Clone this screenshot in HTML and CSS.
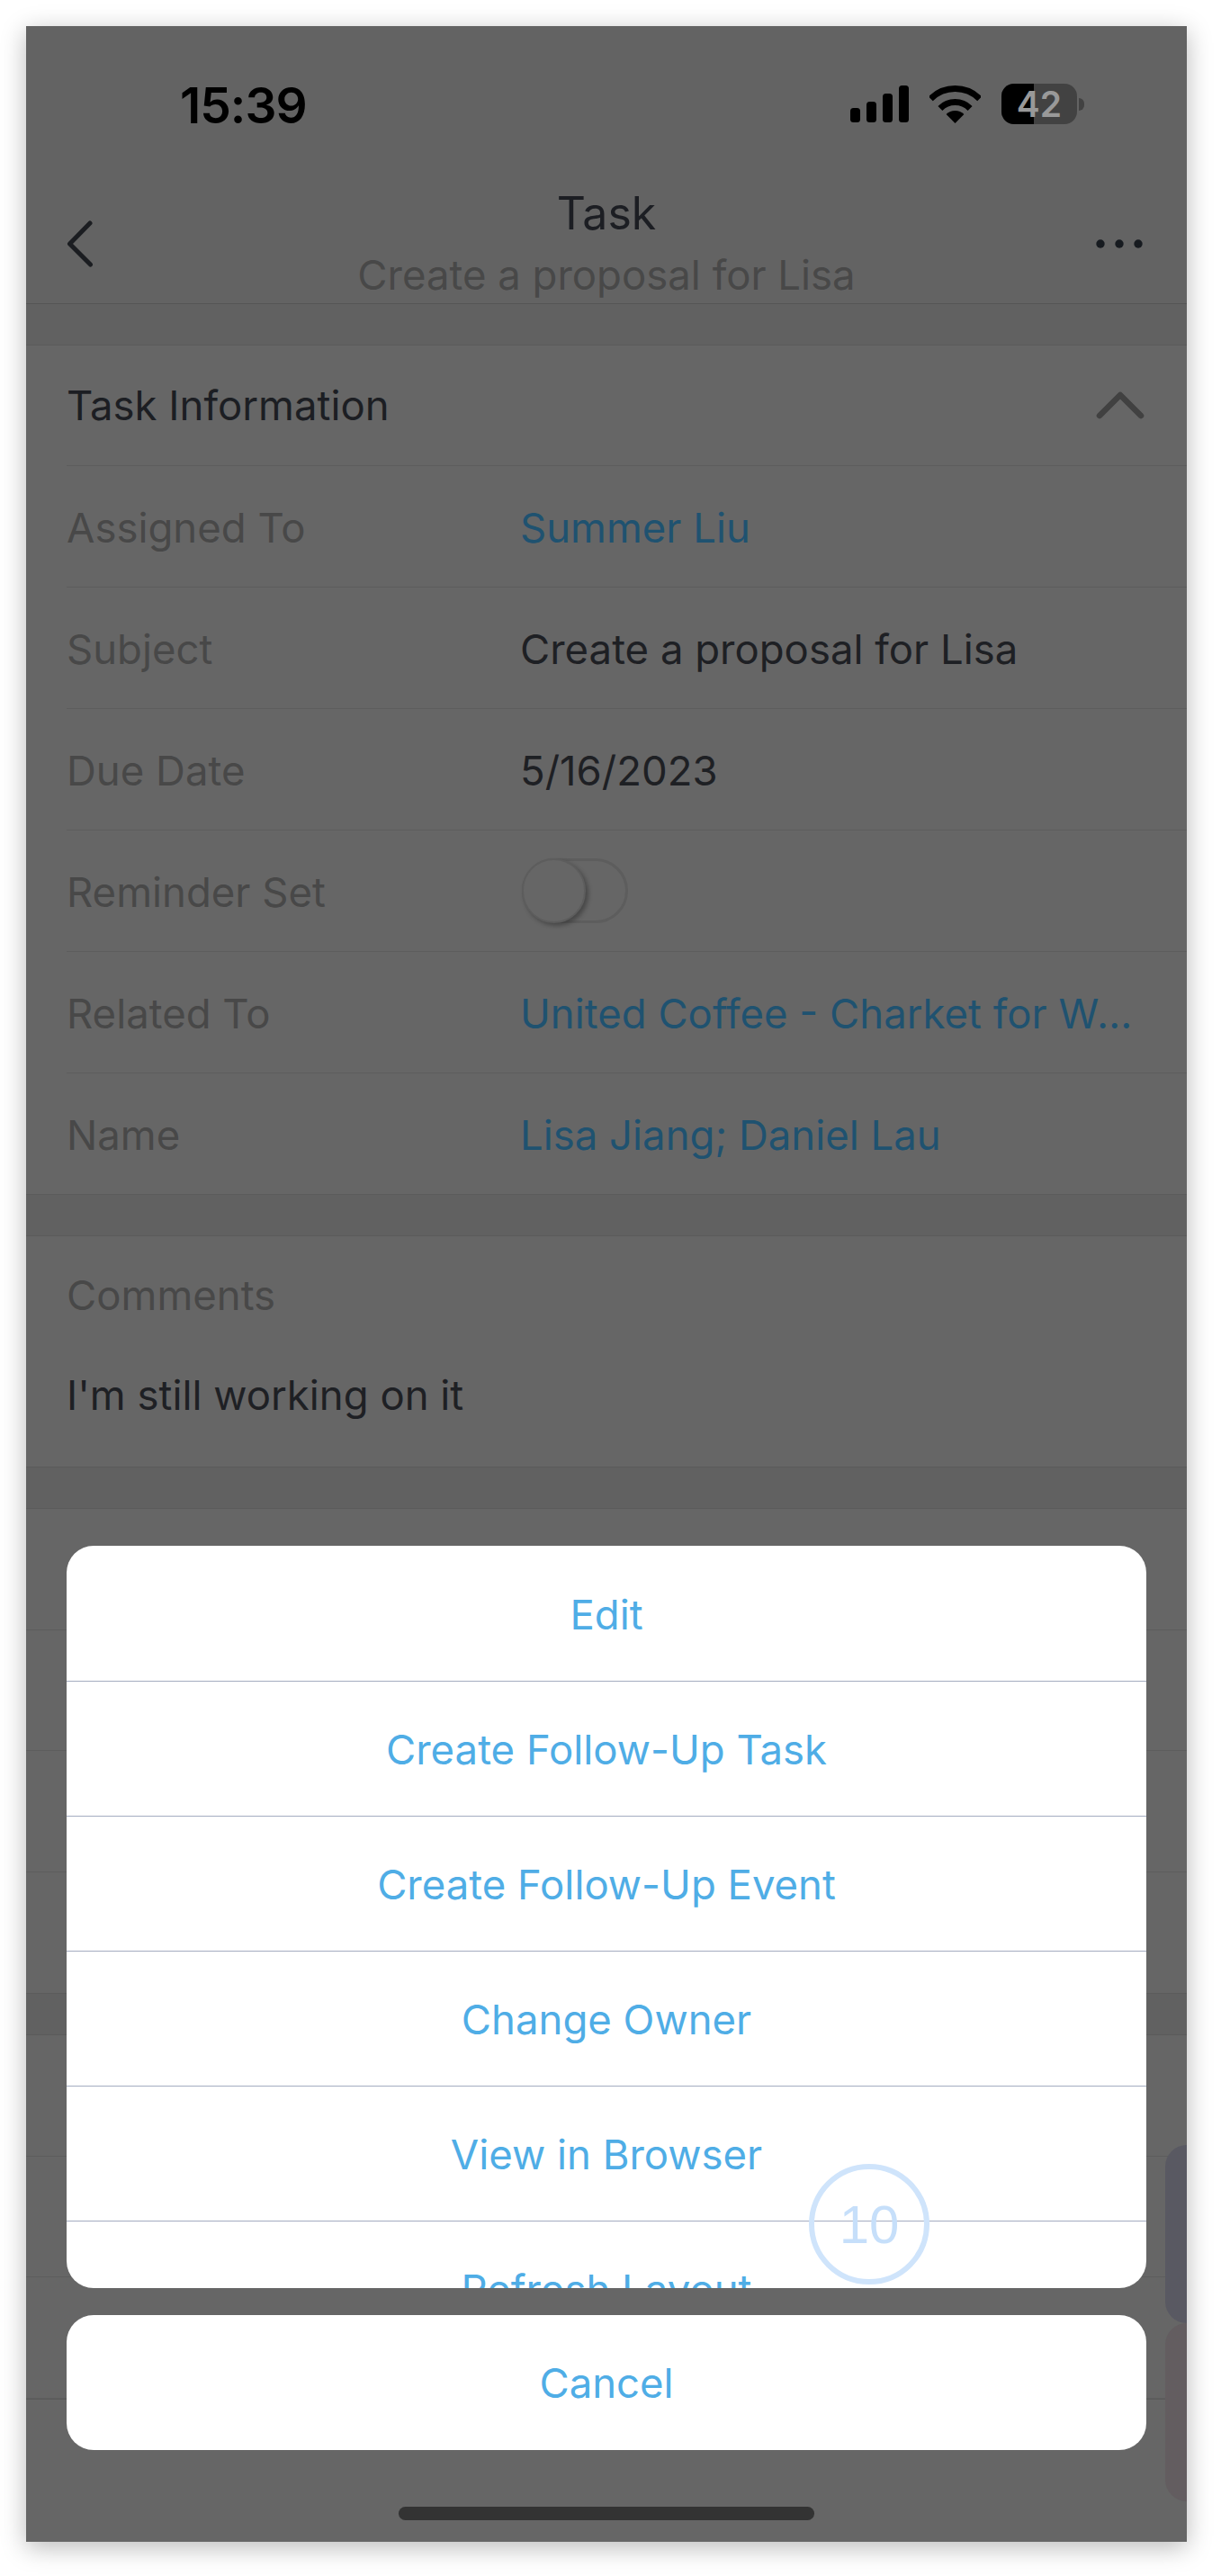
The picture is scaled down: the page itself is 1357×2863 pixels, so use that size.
FILE: index.html
```html
<!DOCTYPE html>
<html lang="en">

<head>
    <meta charset="UTF-8">
    <title>Task - Create a proposal for Lisa</title>
    <link rel="stylesheet" href="styles.css">
</head>

<body>
    <div class="phone">
        <!-- STATUS BAR -->
        <div class="status-bar">
            <span class="status-time">15:39</span>
            <div class="status-icons">
                <svg class="icon-signal" width="65" height="41" viewBox="0 0 65 41">
                    <rect x="0" y="25" width="11" height="16" rx="3.5"></rect>
                    <rect x="18" y="18" width="11" height="23" rx="3.5"></rect>
                    <rect x="36" y="9" width="11" height="32" rx="3.5"></rect>
                    <rect x="54" y="0" width="11" height="41" rx="3.5"></rect>
                </svg>
                <svg class="icon-wifi" width="57" height="42" viewBox="0 0 57 42">
                    <path d="M1.3 14.8A38.5 38.5 0 0 1 55.7 14.8" fill="none" stroke="#000" stroke-width="7"></path>
                    <path d="M11.9 25.4A23.5 23.5 0 0 1 45.1 25.4" fill="none" stroke="#000" stroke-width="7"></path>
                    <path d="M28.5 42L18.6 32.1A14 14 0 0 1 38.4 32.1Z"></path>
                </svg>
                <div class="battery">
                    <div class="battery-body">
                        <div class="battery-fill"></div>
                        <span class="battery-num">42</span>
                    </div>
                    <div class="battery-nub"></div>
                </div>
            </div>
        </div>

        <!-- NAV -->
        <div class="nav">
            <svg class="nav-back" width="30" height="52" viewBox="0 0 30 52">
                <path d="M26 3L3.500 26L26.500 49" fill="none" stroke="#1b1d21" stroke-width="5" stroke-linecap="round" stroke-linejoin="round"></path>
            </svg>
            <div class="nav-title">
                <div class="nav-task">Task</div>
                <div class="nav-sub">Create a proposal for Lisa</div>
            </div>
            <svg class="nav-more" width="52" height="10" viewBox="0 0 52 10">
                <circle cx="5" cy="5" r="4.700"></circle>
                <circle cx="26" cy="5" r="4.700"></circle>
                <circle cx="47" cy="5" r="4.700"></circle>
            </svg>
        </div>

        <div class="gap"></div>

        <!-- TASK INFORMATION -->
        <div class="section">
            <div class="row row-head">
                <span class="head-text">Task Information</span>
                <svg class="head-arrow" width="54" height="31" viewBox="0 0 54 31">
                    <path d="M4 27L27 4L50 27" fill="none" stroke="#414141" stroke-width="6.500" stroke-linecap="round" stroke-linejoin="round"></path>
                </svg>
            </div>
            <div class="row">
                <span class="label">Assigned To</span>
                <span class="value link">Summer Liu</span>
            </div>
            <div class="row">
                <span class="label">Subject</span>
                <span class="value">Create a proposal for Lisa</span>
            </div>
            <div class="row">
                <span class="label">Due Date</span>
                <span class="value">5/16/2023</span>
            </div>
            <div class="row">
                <span class="label">Reminder Set</span>
                <div class="toggle"><div class="toggle-knob"></div></div>
            </div>
            <div class="row">
                <span class="label">Related To</span>
                <span class="value link">United Coffee - Charket for WeChat Setup</span>
            </div>
            <div class="row row-last">
                <span class="label">Name</span>
                <span class="value link">Lisa Jiang; Daniel Lau</span>
            </div>
        </div>

        <div class="gap"></div>

        <!-- COMMENTS -->
        <div class="section comments">
            <div class="label">Comments</div>
            <div class="comment-text">I'm still working on it</div>
        </div>

        <div class="gap"></div>

        <!-- rows behind the sheet -->
        <div class="section">
            <div class="blank-row"></div>
            <div class="blank-row"></div>
            <div class="blank-row"></div>
            <div class="blank-row blank-last"></div>
        </div>

        <div class="gap"></div>

        <div class="section">
            <div class="blank-row"></div>
            <div class="blank-row"></div>
            <div class="blank-row"></div>
        </div>

        <!-- SIDE TABS -->
        <div class="side-tabs">
            <div class="side-tab side-tab-one"></div>
            <div class="side-tab side-tab-two"></div>
        </div>

        <!-- ACTION SHEET -->
        <div class="sheet">
            <div class="sheet-list">
                <div class="sheet-item">Edit</div>
                <div class="sheet-item">Create Follow-Up Task</div>
                <div class="sheet-item">Create Follow-Up Event</div>
                <div class="sheet-item">Change Owner</div>
                <div class="sheet-item">View in Browser</div>
                <div class="sheet-item">Refresh Layout</div>
            </div>
            <div class="sheet-cancel">Cancel</div>
        </div>

        <div class="touch-badge">10</div>
        <div class="home-bar"></div>
    </div>
</body>

</html>
```

FILE: styles.css
```css
html, body {
    margin: 0;
    background-color: #fff;
}

body {
    padding: 29px 38px 38px 29px;
    font-family: Inter, "Liberation Sans", sans-serif;
}

.phone {
    position: relative;
    width: 1290px;
    height: 2796px;
    overflow: hidden;
    background-color: #666;
    box-shadow: 0 6px 26px rgba(0, 0, 0, 0.28);
}

/* status bar */
.status-bar {
    height: 161px;
    display: flex;
    justify-content: space-between;
    box-sizing: border-box;
    padding: 60px 114px 0 171px;
    background-color: #636363;
}

.status-time {
    font-size: 55px;
    font-weight: 600;
    line-height: 56px;
    letter-spacing: -1px;
    color: #000;
}

.status-icons {
    display: flex;
    align-items: flex-start;
    gap: 23px;
    padding-top: 4px;
}

.icon-signal,
.icon-wifi {
    fill: #000;
    margin-top: 2px;
}

.battery {
    display: flex;
    align-items: center;
    gap: 2px;
}

.battery-body {
    position: relative;
    width: 84px;
    height: 45px;
    border-radius: 14px;
    overflow: hidden;
    background-color: #424242;
    display: flex;
    align-items: center;
    justify-content: center;
}

.battery-fill {
    position: absolute;
    left: 0;
    top: 0;
    bottom: 0;
    width: 36px;
    background-color: #000;
}

.battery-num {
    position: relative;
    font-size: 39px;
    font-weight: 600;
    color: #999;
}

.battery-nub {
    width: 6px;
    height: 14px;
    border-radius: 0 7px 7px 0;
    background-color: #424242;
}

/* nav */
.nav {
    height: 148px;
    box-sizing: border-box;
    padding: 0 49px;
    display: grid;
    grid-template-columns: 1fr auto 1fr;
    align-items: center;
    background-color: #636363;
    border-bottom: 1px solid #555;
}

.nav-back {
    margin: 14px 0 0 -4px;
}

.nav-more {
    justify-self: end;
    margin-top: 14px;
}

.nav-more circle {
    fill: #171b20;
}

.nav-title {
    padding-top: 14px;
    text-align: center;
}

.nav-task {
    font-size: 50px;
    line-height: 62px;
    color: #1c1e23;
}

.nav-sub {
    margin-top: 8px;
    font-size: 45.500px;
    line-height: 60px;
    color: #484848;
}

/* sections */
.gap {
    height: 45px;
    background-color: #616161;
    border-bottom: 1px solid #5b5b5b;
}

.section {
    border-bottom: 1px solid #5b5b5b;
}

.row {
    height: 135px;
    box-sizing: border-box;
    margin-left: 45px;
    padding-top: 3px;
    display: flex;
    align-items: center;
    border-bottom: 1px solid #5d5d5d;
    font-size: 45.500px;
}

.row-head {
    height: 134px;
    padding-top: 0;
    justify-content: space-between;
    padding-right: 47px;
}

.row-last {
    height: 134px;
    border-bottom: none;
}

.head-text {
    color: #1c1e23;
}

.label {
    width: 504px;
    flex-shrink: 0;
    font-size: 45.500px;
    color: #484848;
}

.value {
    width: 690px;
    white-space: nowrap;
    overflow: hidden;
    text-overflow: ellipsis;
    color: #1e2024;
}

.link {
    color: #1f5270;
}

.toggle {
    width: 118px;
    height: 72px;
    margin: -3px 0 0 2px;
    box-sizing: border-box;
    border: 3px solid #5d5d5d;
    border-radius: 36px;
}

.toggle-knob {
    width: 71px;
    height: 72px;
    margin: -3px 0 0 -3px;
    box-sizing: border-box;
    border: 2px solid #5d5d5d;
    border-radius: 36px;
    background-color: #666;
    box-shadow: 3px 3px 5px rgba(0, 0, 0, 0.3);
}

.comments {
    height: 256px;
    box-sizing: content-box;
    padding-left: 45px;
}

.comments .label {
    padding-top: 39px;
    line-height: 54px;
}

.comment-text {
    margin-top: 56px;
    font-size: 45.500px;
    line-height: 56px;
    color: #1e2024;
}

.blank-row {
    height: 134.500px;
    border-bottom: 1px solid #5d5d5d;
    box-sizing: border-box;
}

.blank-last {
    border-bottom: none;
}

/* things on top */
.side-tabs {
    position: absolute;
    right: 0;
    top: 2355px;
    width: 24px;
    display: flex;
    flex-direction: column;
}

.side-tab {
    height: 198px;
    border-radius: 24px 0 0 24px;
}

.side-tab-one {
    background-color: #595962;
}

.side-tab-two {
    background-color: #635d60;
}

.sheet {
    position: absolute;
    left: 45px;
    top: 1689px;
    width: 1200px;
    display: flex;
    flex-direction: column;
    gap: 30px;
}

.sheet-list {
    height: 825px;
    box-sizing: border-box;
    padding-top: 1px;
    overflow: hidden;
    border-radius: 30px;
    background-color: #fff;
}

.sheet-item {
    height: 150px;
    box-sizing: border-box;
    padding-top: 1px;
    display: flex;
    align-items: center;
    justify-content: center;
    border-bottom: 1px solid #a4acc0;
    font-size: 45.500px;
    color: #4fade6;
}

.sheet-cancel {
    height: 150px;
    display: flex;
    align-items: center;
    justify-content: center;
    border-radius: 30px;
    background-color: #fff;
    font-size: 45.500px;
    color: #4fade6;
}

.touch-badge {
    position: absolute;
    left: 870px;
    top: 2376px;
    width: 134px;
    height: 134px;
    box-sizing: border-box;
    display: flex;
    align-items: center;
    justify-content: center;
    border: 6px solid #cfe4fb;
    border-radius: 50%;
    font-family: "Liberation Sans", sans-serif;
    font-size: 60px;
    color: #c6dffa;
}

.home-bar {
    position: absolute;
    left: 414px;
    top: 2757px;
    width: 462px;
    height: 15px;
    border-radius: 8px;
    background-color: #333;
}
```
